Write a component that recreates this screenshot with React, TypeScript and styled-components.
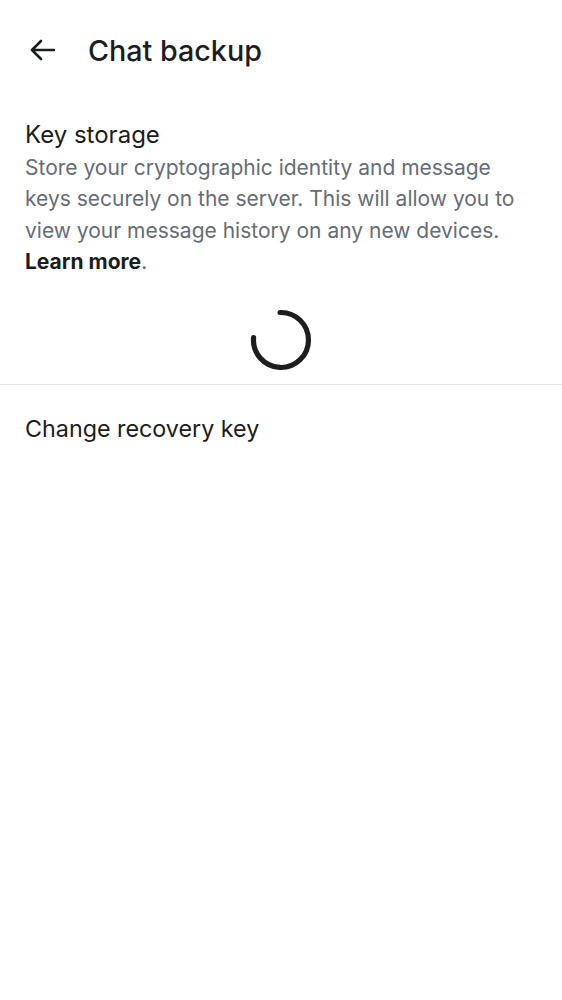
import React from 'react';
import styled, {createGlobalStyle} from 'styled-components';

const TEXT = '#1b1d22';
const SECONDARY = '#656d77';
const DIVIDER = '#e1e6ec';

const GlobalStyle = createGlobalStyle`
  html, body {
    margin: 0;
    padding: 0;
    background: #ffffff;
  }
  body {
    font-family: Inter, "Noto Sans", sans-serif;
    color: ${TEXT};
  }
`;

const BackIcon: React.FC = () => (
  <svg width="26" height="26" viewBox="0 0 26 26" fill="none">
    <path
      d="M24 13H2M11 4L2 13L11 22"
      stroke={TEXT}
      strokeWidth="2.6"
      strokeLinecap="round"
      strokeLinejoin="round"
    />
  </svg>
);

const Spinner: React.FC = () => (
  <svg width="64" height="64" viewBox="0 0 64 64">
    <path
      d="M31 4.5 A27.5 27.5 0 1 1 4.6 29.5"
      fill="none"
      stroke={TEXT}
      strokeWidth="5.2"
      strokeLinecap="round"
    />
  </svg>
);

export default function App() {
  return (
    <Page>
      <GlobalStyle />
      <TopBar>
        <BackButton aria-label="Back">
          <BackIcon />
        </BackButton>
        <Title>Chat backup</Title>
      </TopBar>
      <Section>
        <ItemTitle>Key storage</ItemTitle>
        <Description>
          Store your cryptographic identity and message keys securely on the server. This will allow you to
          view your message history on any new devices. <b>Learn more</b>.
        </Description>
      </Section>
      <SpinnerRow>
        <Spinner />
      </SpinnerRow>
      <Divider />
      <ListItem>Change recovery key</ListItem>
    </Page>
  );
}

const Page = styled.div`
  width: 562px;
  min-height: 1000px;
  background: #ffffff;
`;

const TopBar = styled.div`
  display: flex;
  align-items: center;
  height: 100px;
  padding-left: 30px;
  box-sizing: border-box;
`;

const BackButton = styled.div`
  display: flex;
  align-items: center;
  justify-content: center;
  width: 26px;
  height: 26px;
  margin-right: 32px;
`;

const Title = styled.div`
  font-size: 28.7px;
  font-weight: 500;
`;

const Section = styled.div`
  padding: 18px 25px 0;
`;

const ItemTitle = styled.div`
  font-size: 24px;
  line-height: 34px;
  color: ${TEXT};
`;

const Description = styled.div`
  font-size: 21px;
  line-height: 31.3px;
  color: ${SECONDARY};

  b {
    font-weight: 700;
    color: ${TEXT};
  }
`;

const SpinnerRow = styled.div`
  display: flex;
  justify-content: center;
  padding: 31px 0 12px;
`;

const Divider = styled.div`
  height: 1px;
  background: ${DIVIDER};
`;

const ListItem = styled.div`
  padding: 26px 25px;
  font-size: 23.3px;
  line-height: 36px;
`;
